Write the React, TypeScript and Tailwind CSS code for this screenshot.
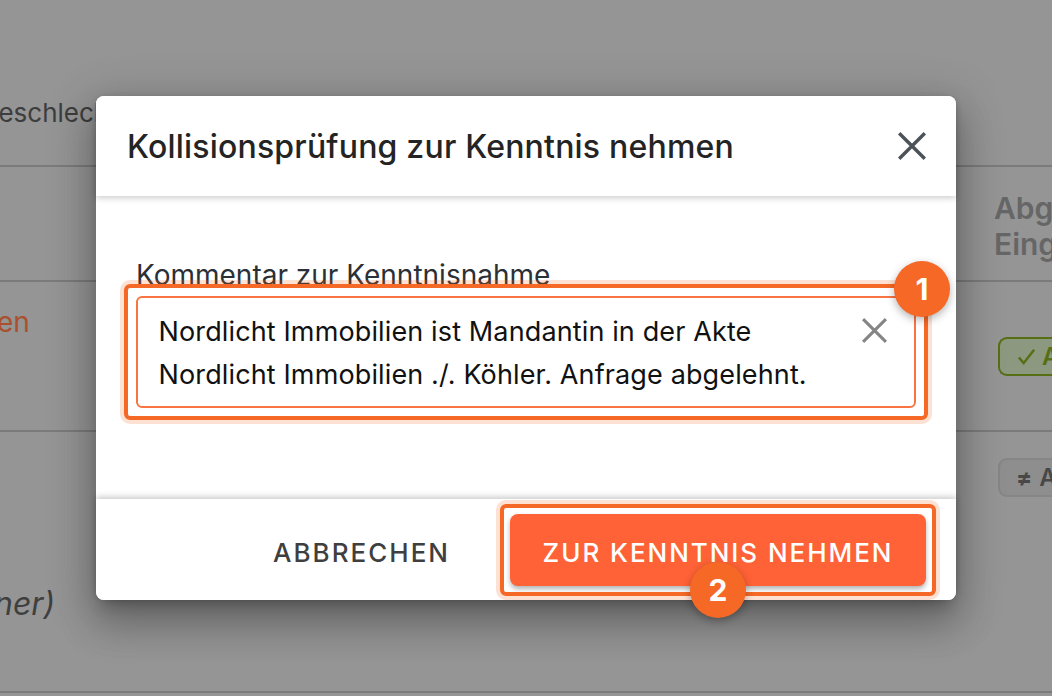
const Highlight = ({ inset }: { inset: string }) => (
  <div
    className={`pointer-events-none absolute ${inset} rounded-[6px] border-4 border-[#f56825] shadow-[0_0_0_4px_rgba(245,104,37,0.2)]`}
  />
);

const StepBadge = ({ n, className }: { n: string; className: string }) => (
  <div
    className={`absolute flex h-[56px] w-[56px] items-center justify-center rounded-full bg-[#f56825] text-[30px] font-bold text-white shadow-[0_3px_8px_rgba(0,0,0,0.3)] ${className}`}
  >
    {n}
  </div>
);

const CloseIcon = ({ className }: { className: string }) => (
  <svg viewBox="0 0 28 28" fill="none" stroke="currentColor" strokeWidth="3.4" className={className}>
    <path d="M1.2 1.2 26.8 26.8M26.8 1.2 1.2 26.8" />
  </svg>
);

const App = () => {
  return (
    <div className="relative h-[696px] w-[1052px] overflow-hidden bg-[#959595] font-['Inter',sans-serif]">
      {/* Table behind the dialog */}
      <div className="flex h-full flex-col">
        <div className="h-[167px] shrink-0 border-b-2 border-[#7b7b7b] pt-[97px]">
          <span className="-ml-[21px] block text-[26px] leading-[32px] text-[#3d3d3d]">Geschlecht</span>
        </div>
        <div className="flex h-[115px] shrink-0 justify-end border-b-2 border-[#7b7b7b] pl-[994px] pt-[23px]">
          <div className="w-[58px] shrink-0 overflow-hidden whitespace-nowrap text-[30px] font-semibold leading-[36px] text-[#666666]">
            Abgelehnt
            <br />
            Eingang
          </div>
        </div>
        <div className="flex h-[150px] shrink-0 items-start justify-between border-b-2 border-[#7b7b7b] pt-[22px]">
          <span className="-ml-[3px] text-[28px] leading-[36px] text-[#a9512f]">en</span>
          <div className="mt-[33px] flex h-[39px] w-[54px] shrink-0 items-center gap-[6px] overflow-hidden whitespace-nowrap rounded-l-[9px] border-y-2 border-l-2 border-[#566f12] bg-[#8d9880] pl-[17px] text-[24px] font-semibold text-[#566f12]">
            <svg viewBox="0 0 20 20" fill="none" stroke="currentColor" strokeWidth="2.6" className="h-[19px] w-[19px] shrink-0">
              <path d="M2 11l5 6L18 3" />
            </svg>
            A
          </div>
        </div>
        <div className="flex h-[261px] shrink-0 items-start justify-between border-b-2 border-[#7b7b7b] pt-[26px]">
          <span className="-ml-[6px] mt-[126px] text-[32px] italic leading-[40px] text-[#3f3f3f]">ner)</span>
          <div className="flex h-[39px] w-[54px] shrink-0 items-center gap-[7px] overflow-hidden whitespace-nowrap rounded-l-[9px] border-y-2 border-l-2 border-[#868686] bg-[#8e8e8e] pl-[16px] text-[24px] font-semibold text-[#484848]">
            <span className="text-[24px] font-bold">≠</span>A
          </div>
        </div>
      </div>

      {/* Dialog */}
      <div className="absolute left-[96px] top-[96px] flex h-[504px] w-[860px] flex-col rounded-[8px] bg-white shadow-[0_11px_15px_-7px_rgba(0,0,0,0.25),0_24px_38px_3px_rgba(0,0,0,0.2),0_9px_46px_8px_rgba(0,0,0,0.16)]">
        <div className="relative z-10 flex h-[100px] shrink-0 items-center justify-between rounded-t-[8px] bg-white pl-[31px] pr-[30px] shadow-[0_2px_6px_rgba(0,0,0,0.2)]">
          <h2 className="pt-[1px] text-[32px] font-medium leading-[40px] tracking-[0.2px] text-[#242424]">
            Kollisionsprüfung zur Kenntnis nehmen
          </h2>
          <CloseIcon className="h-[28px] w-[28px] text-[#4b5258]" />
        </div>

        <div className="flex-1 px-[40px] pt-[63px]">
          <label className="block text-[28px] leading-[32px] text-[#2b3036]">Kommentar zur Kenntnisnahme</label>
          <div className="relative mt-[5px] h-[112px] w-[780px]">
            <div className="flex h-full items-start justify-between rounded-[6px] border-2 border-[#fa7443] pl-[21px] pr-[27.5px] pt-[11.5px]">
              <p className="-ml-[0.5px] whitespace-nowrap text-[27px] leading-[43px] tracking-[0.13px] text-[#111111]">
                Nordlicht Immobilien ist Mandantin in der Akte
                <br />
                Nordlicht Immobilien ./. Köhler. Anfrage abgelehnt.
              </p>
              <CloseIcon className="mt-[8px] h-[25px] w-[25px] shrink-0 text-[#858585]" />
            </div>
            <Highlight inset="-inset-[12px]" />
            <StepBadge n="1" className="-right-[34px] -top-[35px]" />
          </div>
        </div>

        <div className="flex h-[101px] shrink-0 items-start justify-end rounded-b-[8px] bg-white pl-[40px] pr-[30px] pt-[15px] shadow-[0_-2px_6px_rgba(0,0,0,0.22)]">
          <button className="mr-[60px] h-[72px] pt-[4px] text-[26px] font-medium tracking-[2px] text-[#3f3f3f]">ABBRECHEN</button>
          <div className="relative h-[72px] w-[416px]">
            <button className="h-full w-full rounded-[8px] bg-[#ff6236] pt-[4px] text-[26px] font-medium tracking-[1.95px] text-white shadow-[0_3px_5px_rgba(0,0,0,0.3)]">
              ZUR KENNTNIS NEHMEN
            </button>
            <Highlight inset="-inset-[10px]" />
            <StepBadge n="2" className="left-[180px] top-[48px]" />
          </div>
        </div>
      </div>
    </div>
  );
};

export default App;
